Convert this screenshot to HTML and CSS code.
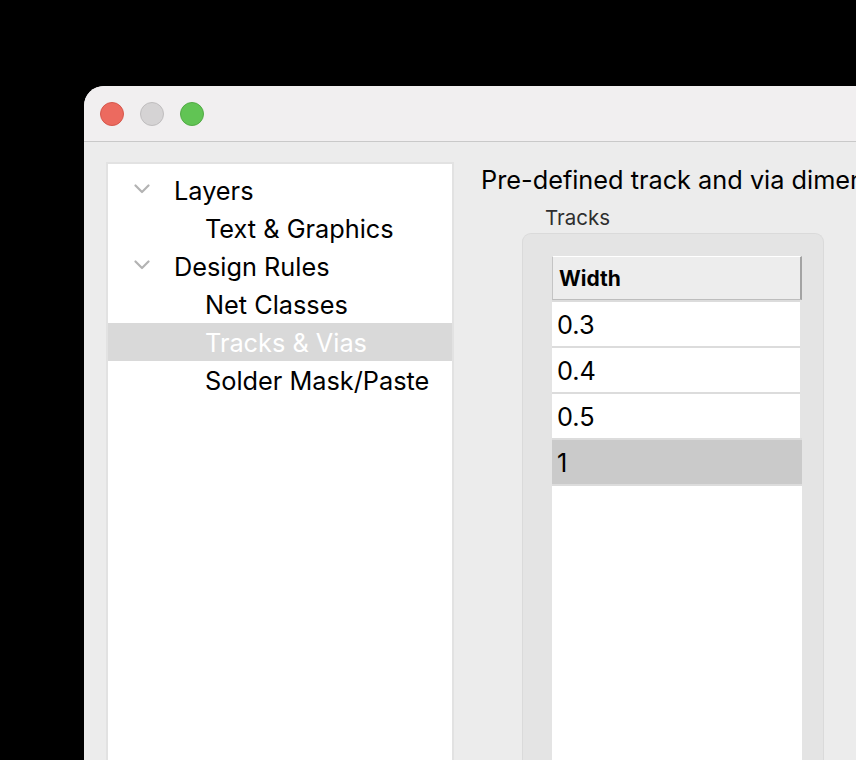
FILE: index.html
```html
<!DOCTYPE html>
<html>
<head>
<meta charset="utf-8">
<link rel="stylesheet" href="styles.css">
</head>
<body>
<div class="window">
  <div class="titlebar">
    <span class="light red"></span>
    <span class="light gray"></span>
    <span class="light green"></span>
  </div>
  <div class="content">
    <div class="tree">
      <div class="row parent"><svg class="chev" width="16" height="10" viewBox="0 0 16 10"><path d="M1.5 1.5 L8 8 L14.5 1.5" fill="none" stroke="#b3b3b3" stroke-width="2.2" stroke-linecap="round" stroke-linejoin="round"/></svg><span>Layers</span></div>
      <div class="row child"><span>Text &amp; Graphics</span></div>
      <div class="row parent"><svg class="chev" width="16" height="10" viewBox="0 0 16 10"><path d="M1.5 1.5 L8 8 L14.5 1.5" fill="none" stroke="#b3b3b3" stroke-width="2.2" stroke-linecap="round" stroke-linejoin="round"/></svg><span>Design Rules</span></div>
      <div class="row child"><span>Net Classes</span></div>
      <div class="row child selected"><span>Tracks &amp; Vias</span></div>
      <div class="row child"><span>Solder Mask/Paste</span></div>
    </div>
    <div class="pane">
      <div class="heading">Pre-defined track and via dimensions:</div>
      <div class="group-label">Tracks</div>
      <div class="group">
        <div class="table">
          <div class="th">Width</div>
          <div class="td">0.3</div>
          <div class="td">0.4</div>
          <div class="td">0.5</div>
          <div class="td sel">1</div>
          <div class="empty"></div>
        </div>
      </div>
    </div>
  </div>
</div>
</body>
</html>
```
FILE: styles.css
```css
html, body {
  margin: 0;
  padding: 0;
  background: #000;
  width: 856px;
  height: 760px;
  overflow: hidden;
}
body {
  font-family: Inter, "Liberation Sans", sans-serif;
  color: #000;
}
.window {
  margin: 86px 0 0 84px;
  width: 900px;
  height: 700px;
  background: #ececec;
  border-top-left-radius: 20px;
  overflow: hidden;
}
.titlebar {
  height: 55px;
  background: #f1eff0;
  border-bottom: 1.5px solid #c9c9c9;
  display: flex;
  align-items: center;
  padding-left: 16px;
  gap: 16px;
}
.light {
  width: 24px;
  height: 24px;
  border-radius: 50%;
  box-sizing: border-box;
}
.red { background: #ec6a5f; border: 1px solid #d5574c; }
.gray { background: #d5d3d4; border: 1px solid #bfbdbe; }
.green { background: #61c454; border: 1px solid #52aa45; }
.content {
  display: flex;
  align-items: flex-start;
  padding: 20px 0 0 22px;
}
.tree {
  width: 344px;
  height: 620px;
  background: #fff;
  border: 2px solid #e2e2e2;
  padding-top: 7px;
  flex: none;
}
.row {
  height: 38px;
  display: flex;
  align-items: center;
  font-size: 25.3px;
  white-space: nowrap;
}
.row.parent { padding-left: 26px; }
.row.child { padding-left: 97px; }
.chev { margin-right: 24px; margin-top: -2px; }
.row.selected { background: #d9d9d9; color: #fff; }
.pane {
  margin-left: 27px;
  padding-top: 3px;
  flex: none;
}
.heading {
  font-size: 25.3px;
  line-height: 30px;
  white-space: nowrap;
}
.group-label {
  font-size: 20.5px;
  color: #2e2e2e;
  margin: 10px 0 0 64px;
  line-height: 26px;
}
.group {
  margin: 2px 0 0 41px;
  width: 302px;
  height: 560px;
  background: #e4e4e4;
  border: 1px solid #dadada;
  border-bottom: none;
  border-radius: 9px 9px 0 0;
  padding: 22px 0 0 29px;
  box-sizing: border-box;
}
.table {
  width: 250px;
  display: flex;
  flex-direction: column;
}
.th {
  height: 44px;
  box-sizing: border-box;
  background: #ededed;
  border-top: 1px solid #fff;
  border-left: 1px solid #c4c4c4;
  border-right: 2px solid #a3a3a3;
  border-bottom: 1px solid #bdbdbd;
  font-weight: bold;
  font-size: 21px;
  display: flex;
  align-items: center;
  padding-left: 6px;
}
.td {
  height: 46px;
  box-sizing: border-box;
  background: #fff;
  border-top: 2px solid #dcdcdc;
  margin-right: 2px;
  font-size: 25.3px;
  display: flex;
  align-items: center;
  padding-left: 5px;
}
.td.sel { background: #cacaca; margin-right: 0; }
.empty {
  height: 300px;
  background: #fff;
  border-top: 2px solid #dcdcdc;
}
```
